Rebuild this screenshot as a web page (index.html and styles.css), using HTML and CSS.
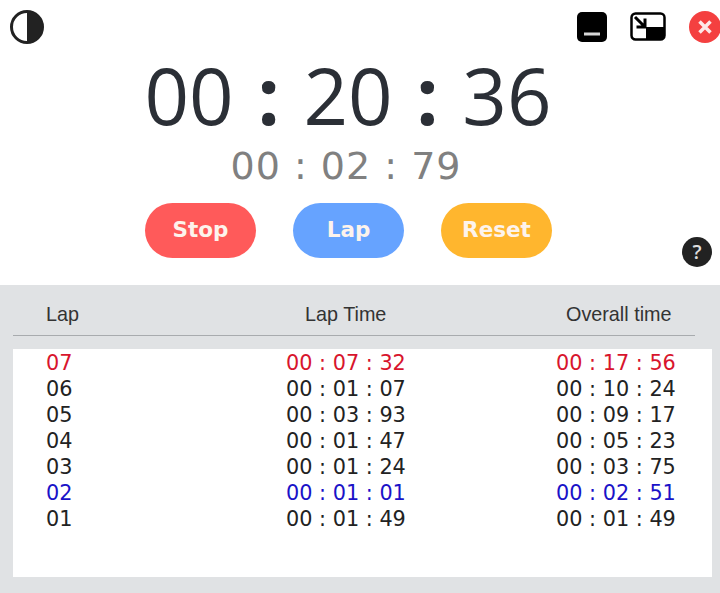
FILE: index.html
```html
<!DOCTYPE html>
<html lang="en">
<head>
    <meta charset="UTF-8">
    <meta name="viewport" content="width=device-width, initial-scale=1.0">
    <title>Stopwatch</title>
    <link rel="stylesheet" href="styles.css">
</head>
<body>

    <div class="top-bar">
        <svg class="theme-icon" width="36" height="36" viewBox="0 0 36 36">
            <circle cx="18" cy="18" r="15.5" fill="#fff" stroke="#222" stroke-width="3"/>
            <path d="M18 2.5a15.5 15.5 0 0 1 0 31z" fill="#222"/>
        </svg>
        <div class="window-buttons">
            <svg width="32" height="30" viewBox="0 0 32 30">
                <rect x="1" y="0" width="30" height="30" rx="5" fill="#000"/>
                <rect x="8" y="20.5" width="16" height="3" fill="#d8d8d8"/>
            </svg>
            <svg width="36" height="30" viewBox="0 0 36 30">
                <rect x="1.5" y="1.5" width="33" height="26" rx="4" fill="#fff" stroke="#000" stroke-width="2.5"/>
                <path d="M16 15h18v10a3 3 0 0 1-3 3H16z" fill="#000"/>
                <path d="M5 5l9 9M15 6.5v8.5H6.5" fill="none" stroke="#000" stroke-width="3"/>
            </svg>
            <svg class="close-icon" width="34" height="34" viewBox="0 0 34 34">
                <circle cx="17" cy="17" r="16" fill="#f44040"/>
                <path d="M11.5 11.5l11 11M22.5 11.5l-11 11" stroke="#fde8e8" stroke-width="3.5"/>
            </svg>
        </div>
    </div>

    <div class="main-time">00 <b>:</b> 20 <b>:</b> 36</div>
    <div class="sub-time">00 : 02 : 79</div>

    <div class="controls">
        <div class="buttons">
            <button class="btn btn-stop">Stop</button>
            <button class="btn btn-lap">Lap</button>
            <button class="btn btn-reset">Reset</button>
        </div>
        <div class="help">?</div>
    </div>

    <div class="panel">
        <div class="lap-header">
            <div class="col-lap">Lap</div>
            <div class="col-time">Lap Time</div>
            <div class="col-total">Overall time</div>
        </div>
        <div class="lap-list">
            <div class="lap-row slowest"><div class="col-lap">07</div><div class="col-time">00 : 07 : 32</div><div class="col-total">00 : 17 : 56</div></div>
            <div class="lap-row"><div class="col-lap">06</div><div class="col-time">00 : 01 : 07</div><div class="col-total">00 : 10 : 24</div></div>
            <div class="lap-row"><div class="col-lap">05</div><div class="col-time">00 : 03 : 93</div><div class="col-total">00 : 09 : 17</div></div>
            <div class="lap-row"><div class="col-lap">04</div><div class="col-time">00 : 01 : 47</div><div class="col-total">00 : 05 : 23</div></div>
            <div class="lap-row"><div class="col-lap">03</div><div class="col-time">00 : 01 : 24</div><div class="col-total">00 : 03 : 75</div></div>
            <div class="lap-row fastest"><div class="col-lap">02</div><div class="col-time">00 : 01 : 01</div><div class="col-total">00 : 02 : 51</div></div>
            <div class="lap-row"><div class="col-lap">01</div><div class="col-time">00 : 01 : 49</div><div class="col-total">00 : 01 : 49</div></div>
        </div>
    </div>

</body>
</html>
```

FILE: styles.css
```css
html, body {
    height: 100%;
}

body {
    margin: 0;
    display: flex;
    flex-direction: column;
    overflow: hidden;
    background: #fff;
    font-family: "DejaVu Sans", sans-serif;
    color: #222;
}

.top-bar {
    display: flex;
    justify-content: space-between;
    align-items: center;
    height: 36px;
    margin-top: 9px;
    padding-left: 9px;
}

.window-buttons {
    display: flex;
    align-items: center;
    gap: 22px;
    margin-right: -2px;
}

.main-time {
    height: 100px;
    padding-right: 24px;
    font-family: "Open Sans", sans-serif;
    font-size: 78px;
    line-height: 100px;
    word-spacing: 3.5px;
    text-align: center;
    color: #2b2f36;
}

.main-time b {
    font-weight: 700;
}

.sub-time {
    height: 44px;
    padding-right: 28px;
    font-size: 38px;
    line-height: 42px;
    text-align: center;
    color: #808080;
    letter-spacing: 1px;
}

.controls {
    display: grid;
    grid-template-columns: 145px auto 1fr;
    height: 82px;
    margin-top: 14px;
}

.buttons {
    grid-column: 2;
    display: flex;
    gap: 37px;
}

.btn {
    width: 111px;
    height: 55px;
    padding-bottom: 4px;
    border: 0;
    border-radius: 28px;
    font-family: "DejaVu Sans", sans-serif;
    font-size: 21.5px;
    font-weight: bold;
    color: #fdf3ec;
}

.btn-stop {
    background: #ff5a5a;
}

.btn-lap {
    background: #66a3ff;
}

.btn-reset {
    background: #ffb62e;
}

.help {
    grid-column: 3;
    justify-self: end;
    width: 30px;
    height: 30px;
    margin-top: 34px;
    margin-right: 8px;
    border-radius: 50%;
    background: #222;
    color: #ddd;
    font-family: "Open Sans", sans-serif;
    font-size: 20px;
    font-weight: 600;
    line-height: 30px;
    text-align: center;
}

.panel {
    flex: 1;
    display: flex;
    flex-direction: column;
    background: #e0e2e4;
    padding: 0 8px 16px 13px;
}

.lap-header {
    display: flex;
    align-items: center;
    height: 42px;
    padding-top: 8px;
    margin-right: 17px;
    border-bottom: 1px solid #a8abae;
    font-family: "Liberation Sans", sans-serif;
    font-size: 19.8px;
    color: #333;
}

.lap-list {
    flex: 1;
    margin-top: 13px;
    padding-top: 1px;
    background: #fff;
}

.lap-row {
    display: flex;
    align-items: center;
    height: 26px;
    font-size: 20.8px;
    color: #222;
}

.col-lap {
    width: 273px;
    padding-left: 33px;
    box-sizing: border-box;
}

.col-time {
    width: 270px;
}

.col-total {
    white-space: nowrap;
}

.lap-header .col-lap {
    width: 292px;
}

.lap-header .col-time {
    width: 261px;
}

.slowest {
    color: #d8152d;
}

.fastest {
    color: #1a12c8;
}
```
